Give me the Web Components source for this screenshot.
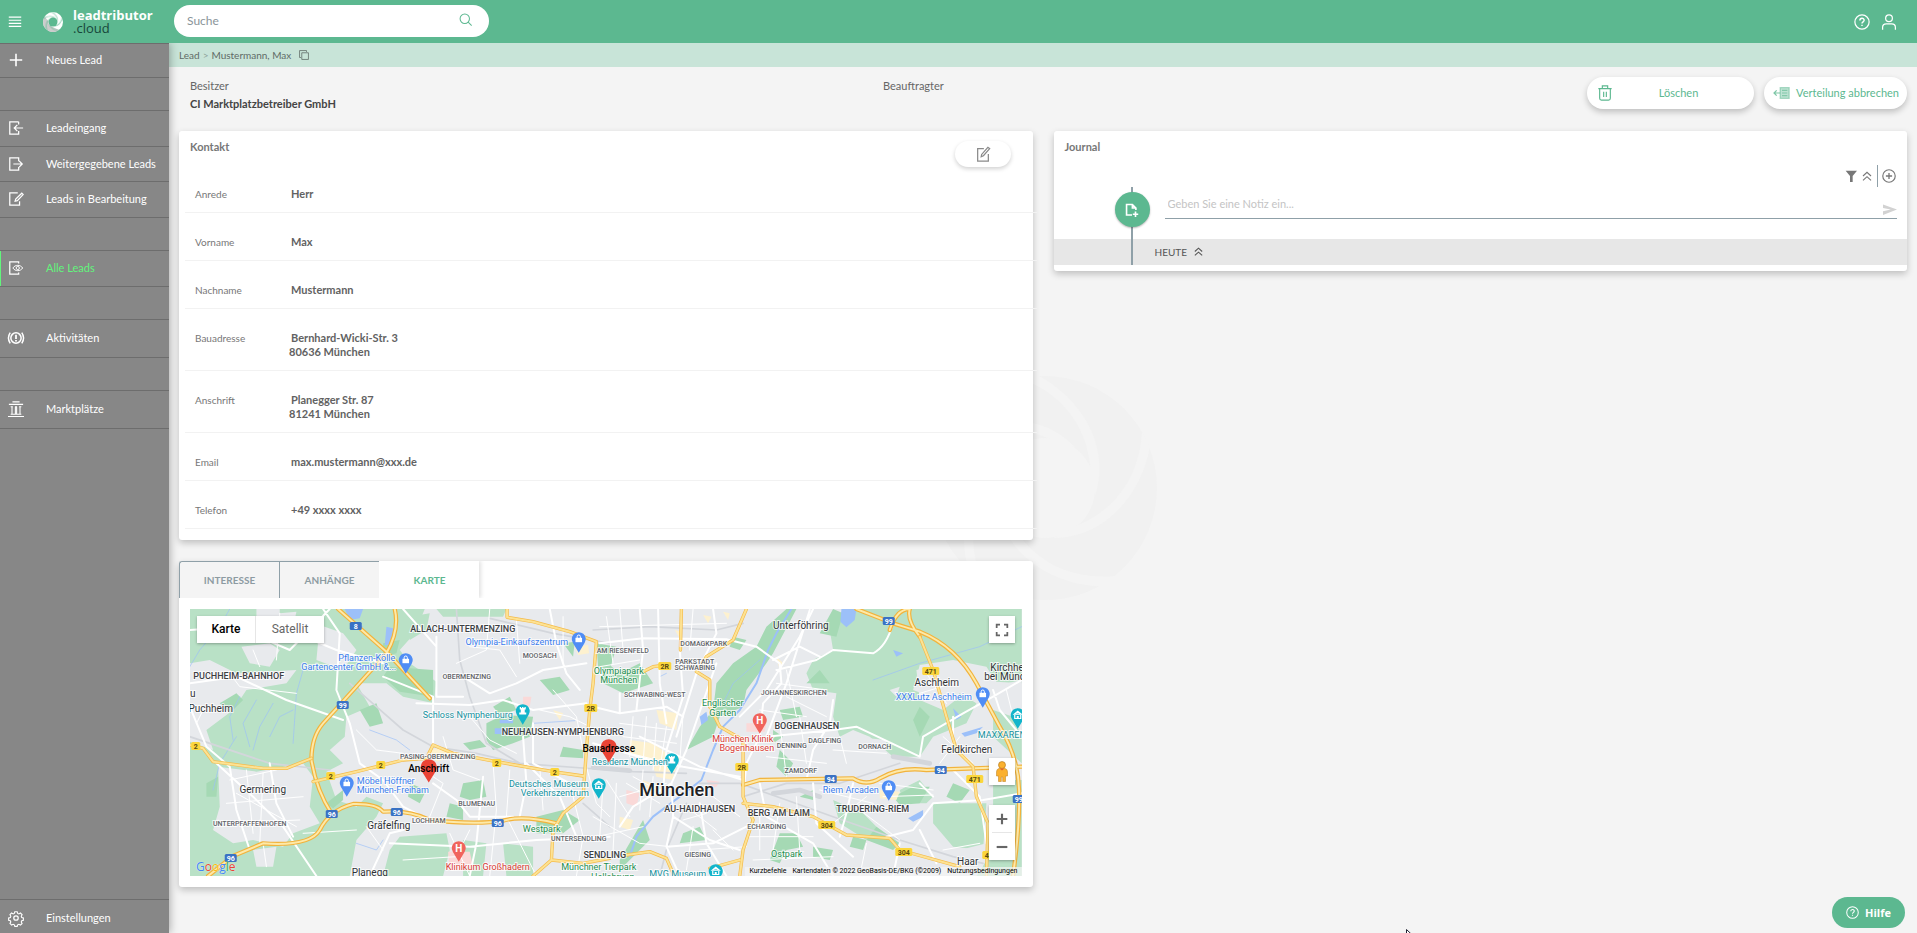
<!DOCTYPE html>
<html lang="de">
<head>
<meta charset="utf-8">
<meta name="viewport" content="width=device-width, initial-scale=1">
<title>leadtributor.cloud</title>
<style>
  html, body { margin: 0; height: 100%; }
  body {
    font: 11px/16px Lato, Roboto, sans-serif;
    color: #555; background: #f4f4f4;
    --green: #5cb890; --mint: #c8e4d8; --slate: #8fa0a8;
  }
</style>
</head>
<body>
<lt-app></lt-app>
<script>
const define = (tag, html, setup) => {
  const tpl = document.createElement('template');
  tpl.innerHTML = '<style>*{box-sizing:border-box}</style>' + html;
  customElements.define(tag, class extends HTMLElement {
    connectedCallback() {
      if (this.shadowRoot) return;
      this.attachShadow({ mode: 'open' }).append(tpl.content.cloneNode(true));
      if (setup) setup(this, this.shadowRoot);
    }
  });
};

/* ---------- icons ---------- */
const ICONS = {
  menu: '<path d="M2 3.500H16M2 7H16M2 10.500H16M2 14H16" stroke-width="1.300"/>',
  plus: '<path d="M9 2V16M2 9H16" stroke-width="1.800"/>',
  inbox: '<path d="M12 2H2V16H12V12.500M12 2V5M17 9H7M10.500 5.500 7 9 10.500 12.500"/>',
  outbox: '<path d="M12 6V2H2V16H12V12.500M6 9H16M12.500 5.500 16 9 12.500 12.500"/>',
  editlead: '<path d="M11 2H2V16H13V11.500M8 11.500 8.700 9 15.500 2.500 17 4 10.500 10.800Z"/>',
  seelead: '<path d="M12 4V2H2V16H12V14"/><path d="M5.500 9C8 5 14 5 16.500 9 14 13 8 13 5.500 9Z" stroke-width="1.100"/><circle cx="11" cy="9" r="1.800" stroke-width="1.100"/>',
  activity: '<circle cx="9" cy="9" r="5.800" stroke-width="1.700"/><path d="M9 5.300V10M9 11.300V12.800" stroke-width="2"/><path d="M2.500 3Q-1.500 9 2.500 15M15.500 3Q19.500 9 15.500 15" stroke-width="1.700"/>',
  market: '<path d="M5 1H13M1 3.800H17M3 6.500H5.500M7.800 6.500H10.200M12.500 6.500H15M4.500 7V15M8.300 7V15M9.700 7V15M13.500 7V15M3 15H15M0 17.500H18" stroke-width="1.200"/>',
  gear: '<circle cx="9" cy="9" r="2.500"/><path d="M7.500 1.200h3l.6 2.100 1.500.6 1.900-1.100 2.100 2.100-1 1.900.6 1.500 2 .6v3l-2 .6-.6 1.500 1 1.900-2.100 2-1.900-1-1.500.6-.6 2h-3l-.6-2-1.500-.6-1.900 1-2-2 1-1.900-.6-1.500-2.100-.6v-3l2.100-.6.6-1.500-1-1.900 2-2.100 1.900 1.100 1.500-.6Z" transform="translate(.9 .9) scale(.9)"/>',
  search: '<circle cx="8" cy="8" r="6.500"/><path d="M12.700 12.700 17.500 17.500"/>',
  help: '<circle cx="9" cy="9" r="8"/><path d="M6.600 7.300C6.600 4 11.400 4 11.400 7 11.400 8.800 9 8.800 9 10.700M9 12.200V13.600" stroke-width="1.600"/>',
  user: '<circle cx="9" cy="4.800" r="3.800"/><path d="M1.800 17.800V15Q1.800 11 6 11H12Q16.200 11 16.200 15V17.800"/>',
  copy: '<path d="M3.500 13.500H1V1H13.500V3.500M5 5H17V17H5Z"/>',
  edit: '<path d="M10 3H3V17H15V9M7 12 7.500 9.500 14.500 1.500 16.500 3 9.500 11Z"/>',
  trash: '<path d="M1.500 4H16.500M6 4V1H12V4M3 4V15Q3 17 5 17H13Q15 17 15 15V4M7.500 7.500V13.500M10.500 7.500V13.500" stroke-width="1.300"/>',
  recall: '<path d="M0 9H7M3 6 0 9 3 12" stroke-opacity=".8"/><path d="M7 3H17V15H7Z" fill="currentColor" fill-opacity=".4" stroke-opacity=".5"/><path d="M9 6H15M9 9H15M9 12H15" stroke-opacity=".6"/>',
  filter: '<path d="M1 1H18L11.500 9V18H7.500V9Z" fill="currentColor" stroke="none"/>',
  up: '<path d="M3 9 9 3.500 15 9M3 15.500 9 10 15 15.500" stroke-width="1.700"/>',
  add: '<circle cx="9" cy="9" r="8" stroke-width="1.500"/><path d="M9 5V13M5 9H13" stroke-width="1.700"/>',
  send: '<path d="M0 2 18 8.500 0 15.500V10.700L10 8.500 0 6.500Z" fill="currentColor" stroke="none"/>',
  note: '<path d="M9 15.500H2V2H9.500L14 6.500V9M9.500 2V6.500H14M13.500 11V18M10 14.500H17" stroke-width="2.100"/>',
  full: '<path d="M1 6V1H6M12 1H17V6M17 12V17H12M6 17H1V12" stroke-width="2.600"/>',
  minus: '<path d="M1 9H17" stroke-width="3.200"/>',
  more: '<path d="M1 9H17M9 1V17" stroke-width="3.200"/>'
};
define('lt-icon', `<style>
  :host { display: inline-flex; width: 14px; height: 14px; flex: none; }
  svg { width: 100%; height: 100%; overflow: visible; }
</style><svg viewBox="0 0 18 18" fill="none" stroke="currentColor" stroke-width="1.400" aria-hidden="true"></svg>`,
  (el, root) => { root.querySelector('svg').innerHTML = ICONS[el.getAttribute('name')] || ''; });

/* Aperture mark: disc with five curved blade gaps around an open centre. */
define('lt-mark', `<style>
  :host { display: block; aspect-ratio: 1; }
  svg { display: block; width: 100%; height: 100%; }
  .gap { fill: var(--mark-gap); }
  .blades { opacity: var(--mark-blades, 1); }
  .disc { fill: var(--mark-fill); }
  .shade { fill: var(--mark-shade, var(--mark-fill)); }
</style><svg viewBox="-336 -336 672 672" aria-hidden="true">
  <circle class="disc" r="336"/>
  <path class="shade" d="M-336 0A336 336 0 0 0 200 270L-40 150A150 150 0 0 1 -150 -20L-280 -185A336 336 0 0 0 -336 0Z"/>
  <circle class="gap" r="150"/>
  <g class="gap blades"></g>
</svg>`, (el, root) => {
  root.querySelector('g').innerHTML = [0, 82, 154, 226, 288].map(a =>
    `<path transform="rotate(${a})" d="M291 -172C285 -50 225 60 95 113L25 150C180 150 290 20 315 -125Z"/>`).join('');
});

/* ---------- header ---------- */
define('lt-header', `<style>
  :host { display: flex; align-items: center; height: 43px; background: var(--green); color: #fff; position: relative; z-index: 3; }
  button { border: 0; background: none; color: inherit; padding: 0; display: flex; }
  .menu { margin-left: 7px; }
  .brand { display: flex; align-items: center; gap: 10px; margin-left: 20px; width: 131px; color: #fff; text-decoration: none; }
  lt-mark { width: 20px; --mark-fill: #fff; --mark-shade: #ccc; --mark-gap: var(--green); --mark-blades: .7; }
  .name { display: block; font: 13px/13px "Open Sans", sans-serif; }
  .name b, .name span { display: block; height: 13px; }
  .name span { color: #17473a; }
  form { display: flex; align-items: center; width: 315px; height: 32px; margin-top: -1px; padding: 0 17px 0 13px; border-radius: 16px; background: #fff; color: var(--green); }
  input { flex: 1; min-width: 0; border: 0; outline: 0; padding: 0; background: none; font: inherit; font-size: 12px; color: #555; }
  input::placeholder { color: #8a9499; opacity: 1; }
  form lt-icon { width: 13px; height: 13px; margin-top: -4px; }
  .tools { margin-left: auto; display: flex; gap: 11px; padding-right: 20px; }
  .tools lt-icon, .menu lt-icon { width: 16px; height: 16px; }
</style>
<button class="menu" aria-label="Menü"><lt-icon name="menu"></lt-icon></button>
<a class="brand" href="#"><lt-mark></lt-mark><span class="name"><b>leadtributor</b><span>.cloud</span></span></a>
<form role="search"><input type="text" aria-label="Suche" placeholder="Suche"><button type="button" aria-label="Suchen"><lt-icon name="search"></lt-icon></button></form>
<div class="tools"><button aria-label="Hilfe"><lt-icon name="help"></lt-icon></button><button aria-label="Konto"><lt-icon name="user"></lt-icon></button></div>`);

/* ---------- sidebar ---------- */
define('lt-nav-item', `<style>
  :host { display: block; height: 36px; border-top: 1px solid #6d6d6d; color: #fff; }
  :host([tall]) { height: 38px; }
  :host([mid]) { height: 35px; }
  :host([slim]) { height: 34px; }
  a { display: flex; align-items: center; gap: 22px; height: 100%; padding-left: 8px; padding-bottom: 1px; color: inherit; text-decoration: none; white-space: nowrap; }
  :host([foot]) a { padding: 3px 0 0 8px; }
  :host([active]) { color: #62f57c; }
  :host([active]) a { box-shadow: inset 1px 0 #62f57c; }
  lt-icon { color: #fff; width: 16px; height: 16px; }
</style><a href="#"><lt-icon></lt-icon><slot></slot></a>`,
  (el, root) => {
    const icon = document.createElement('lt-icon');
    icon.setAttribute('name', el.getAttribute('icon'));
    root.querySelector('lt-icon').replaceWith(icon);
  });
define('lt-sidebar', `<style>
  :host { display: block; width: 169px; background: #878787; box-shadow: 1px 0 8px rgba(0,0,0,.3); position: relative; z-index: 2; }
  nav { display: flex; flex-direction: column; height: 100%; }
  .gap { height: 33px; border-top: 1px solid #6d6d6d; }
  .rest { flex: 1; border-top: 1px solid #6d6d6d; }
</style><nav>
  <lt-nav-item slim icon="plus">Neues Lead</lt-nav-item><div class="gap"></div>
  <lt-nav-item icon="inbox">Leadeingang</lt-nav-item>
  <lt-nav-item mid icon="outbox">Weitergegebene Leads</lt-nav-item>
  <lt-nav-item icon="editlead">Leads in Bearbeitung</lt-nav-item><div class="gap"></div>
  <lt-nav-item active icon="seelead">Alle Leads</lt-nav-item><div class="gap"></div>
  <lt-nav-item tall icon="activity">Aktivitäten</lt-nav-item><div class="gap"></div>
  <lt-nav-item tall icon="market">Marktplätze</lt-nav-item><div class="rest"></div>
  <lt-nav-item slim foot icon="gear">Einstellungen</lt-nav-item>
</nav>`);

/* ---------- shared pieces ---------- */
define('lt-crumbs', `<style>
  :host { display: flex; align-items: center; height: 24px; padding-left: 10px; background: var(--mint); font-size: 10px; color: #5f6b66; }
  a { color: inherit; text-decoration: none; }
  i { font-style: normal; margin: 0 3px; color: #8fa59b; }
  button { border: 0; background: none; padding: 0; margin-left: 8px; display: flex; color: #5f6b66; }
  lt-icon { width: 10px; height: 10px; }
</style><a href="#">Lead</a><i>&gt;</i><a href="#">Mustermann, Max</a><button aria-label="Kopieren"><lt-icon name="copy"></lt-icon></button>`);

define('lt-card', `<style>
  :host { display: block; background: #fff; border-radius: 3px; box-shadow: 0 3px 7px rgba(0,0,0,.22); }
  h2 { margin: 0; padding: 8px 11px 0; font-size: 11px; line-height: 16px; font-weight: 700; color: #777; }
</style><h2></h2><slot></slot>`, (el, root) => { root.querySelector('h2').textContent = el.getAttribute('heading'); });

define('lt-pill', `<style>
  :host { display: block; }
  button { display: flex; align-items: center; justify-content: center; width: 100%; height: 32px; padding: 0 10px; border: 0; border-radius: 16px; background: #fff; box-shadow: 0 3px 6px rgba(0,0,0,.22); font: inherit; color: var(--green); }
  span { flex: 1; text-align: center; white-space: nowrap; }
  :host([snug]) button { padding-right: 8px; }
  :host([snug]) span { text-align: right; }
</style><button><slot name="icon"></slot><span><slot></slot></span></button>`);

define('lt-toolbar', `<style>
  :host { display: flex; justify-content: space-between; align-items: flex-start; height: 64px; }
  dl { margin: 0; line-height: 18px; }
  dt { color: #666; } dd { margin: 0; font-weight: 700; color: #444; }
  .who { width: calc(50% - 160px); padding: 10px 0 0 11px; }
  .acting { flex: 1; padding-top: 10px; }
  .actions { display: flex; gap: 10px; padding-top: 10px; }
  .actions lt-pill:first-child { width: 167px; }
  .actions lt-pill:last-child { width: 143px; }
  lt-icon { width: 16px; height: 16px; }
</style>
<dl class="who"><dt>Besitzer</dt><dd>CI Marktplatzbetreiber GmbH</dd></dl>
<dl class="acting"><dt>Beauftragter</dt></dl>
<div class="actions"><lt-pill><lt-icon slot="icon" name="trash"></lt-icon>Löschen</lt-pill><lt-pill snug><lt-icon slot="icon" name="recall"></lt-icon>Verteilung abbrechen</lt-pill></div>`);

/* ---------- contact ---------- */
define('lt-contact', `<style>
  :host { display: block; }
  lt-card { height: 409px; position: relative; }
  button { position: absolute; right: 22px; top: 10px; width: 56px; height: 26px; border: 0; border-radius: 13px; background: #fff; box-shadow: 0 2px 4px rgba(0,0,0,.18); color: #8a8a8a; display: flex; align-items: center; justify-content: center; }
  button lt-icon { width: 16px; height: 16px; }
  dl { margin: 10px -4px 0 6px; }
  .row { display: grid; grid-template-columns: 96px 1fr; height: 48px; padding: 22px 0 0 10px; border-bottom: 1px solid #f2f2f2; line-height: 14px; }
  .double { height: 62px; }
  dt { font-size: 10px; color: #777; }
  dd { margin: 0; color: #626262; font-weight: 700; }
  dd span { display: block; margin-left: -2px; }
</style><lt-card heading="Kontakt"><button aria-label="Bearbeiten"><lt-icon name="edit"></lt-icon></button>
<dl>
  <div class="row"><dt>Anrede</dt><dd>Herr</dd></div>
  <div class="row"><dt>Vorname</dt><dd>Max</dd></div>
  <div class="row"><dt>Nachname</dt><dd>Mustermann</dd></div>
  <div class="row double"><dt>Bauadresse</dt><dd>Bernhard-Wicki-Str. 3<span>80636 München</span></dd></div>
  <div class="row double"><dt>Anschrift</dt><dd>Planegger Str. 87<span>81241 München</span></dd></div>
  <div class="row"><dt>Email</dt><dd>max.mustermann@xxx.de</dd></div>
  <div class="row"><dt>Telefon</dt><dd>+49 xxxx xxxx</dd></div>
</dl></lt-card>`);

/* ---------- journal ---------- */
define('lt-journal', `<style>
  :host { display: block; }
  button { border: 0; background: none; padding: 0; color: #777; display: flex; font: inherit; }
  .tools { display: flex; align-items: center; justify-content: flex-end; gap: 4px; height: 22px; margin-top: 10px; padding-right: 11px; }
  .tools i { width: 1px; height: 22px; background: var(--slate); }
  .tools .s { width: 12px; height: 12px; }
  .feed { position: relative; }
  .line { position: absolute; left: 77px; top: 0; bottom: 0; width: 2px; background: var(--slate); }
  .entry { display: flex; height: 52px; padding: 5px 10px 0 61px; }
  .dot { position: relative; z-index: 1; width: 35px; height: 35px; border-radius: 50%; background: var(--green); color: #fff; display: flex; align-items: center; justify-content: center; box-shadow: 0 1px 2px rgba(0,0,0,.3); }
  form { flex: 1; display: flex; height: 27px; margin-left: 15px; border-bottom: 1px solid var(--slate); }
  input { flex: 1; border: 0; outline: 0; padding: 0 3px 2px; background: none; font: inherit; color: #555; }
  input::placeholder { color: #c4c4c4; opacity: 1; }
  form button { color: #d2d2d2; align-items: flex-end; padding-bottom: 1px; }
  .day { display: flex; align-items: center; gap: 6px; height: 26px; padding: 0 0 1px 101px; background: #e7e7e7; font-size: 10px; color: #555; }
  .day lt-icon { width: 11px; height: 11px; }
  lt-card { height: 140px; }
</style><lt-card heading="Journal">
<div class="tools"><button aria-label="Filter"><lt-icon class="s" name="filter"></lt-icon></button><button aria-label="Einklappen"><lt-icon class="s" name="up"></lt-icon></button><i></i><button aria-label="Hinzufügen"><lt-icon name="add"></lt-icon></button></div>
<div class="feed">
  <div class="entry"><span class="dot"><lt-icon name="note"></lt-icon></span><form><input type="text" aria-label="Notiz" placeholder="Geben Sie eine Notiz ein..."><button type="button" aria-label="Senden"><lt-icon name="send"></lt-icon></button></form></div>
  <div class="day">HEUTE <lt-icon name="up"></lt-icon></div>
  <div class="line"></div>
</div></lt-card>`);

/* ---------- map ---------- */
/* Two survey tiles, three units to a pixel; TILE holds each tile's shift in pixels. */
const TILE = { w: -20, e: 410 };
const LABELS = [
  ['w', 878, 237, 'ALLACH-UNTERMENZING', 9, 't'], ['w', 1110, 318, 'MOOSACH', 7, 's'], ['w', 890, 381, 'OBERMENZING', 7, 's'],
  ['w', 208, 379, 'PUCHHEIM-BAHNHOF', 9, 't'], ['w', 68, 431, 'u', 10, 'o'], ['w', 123, 476, 'Puchheim', 10, 'o'],
  ['w', 1040, 276, 'Olympia-Einkaufszentrum', 9, 'b'], ['w', 592, 324, 'Pflanzen-Kölle', 9, 'b'], ['w', 537, 352, 'Gartencenter GmbH &...', 9, 'b'],
  ['w', 895, 494, 'Schloss Nymphenburg', 9, 'c'], ['w', 1178, 546, 'NEUHAUSEN-NYMPHENBURG', 9, 't'],
  ['w', 805, 620, 'PASING-OBERMENZING', 7, 's'], ['w', 280, 721, 'Germering', 10, 'o'], ['w', 240, 822, 'UNTERPFAFFENHOFEN', 7, 's'],
  ['w', 647, 692, 'Möbel Höffner', 9, 'b'], ['w', 669, 720, 'München-Freiham', 9, 'b'], ['w', 920, 762, 'BLUMENAU', 7, 's'],
  ['w', 777, 814, 'LOCHHAM', 7, 's'], ['w', 657, 829, 'Gräfelfing', 10, 'o'], ['w', 1117, 836, 'Westpark', 9, 'g'],
  ['w', 1228, 867, 'UNTERSENDLING', 7, 's'], ['w', 955, 950, 'Klinikum Großhadern', 9, 'r'], ['w', 600, 969, 'Planegg', 10, 'o'],
  ['w', 1138, 701, 'Deutsches Museum', 9, 'c'], ['w', 1155, 729, 'Verkehrszentrum', 9, 'c'],
  ['e', 604, 228, 'Unterföhring', 10, 'o'], ['e', 312, 281, 'DOMAGKPARK', 7, 's'], ['e', 68, 303, 'AM RIESENFELD', 7, 's'],
  ['e', 286, 337, 'PARKSTADT', 7, 's'], ['e', 286, 355, 'SCHWABING', 7, 's'], ['e', 56, 362, 'Olympiapark', 9, 'g'], ['e', 56, 390, 'München', 9, 'g'],
  ['e', 166, 435, 'SCHWABING-WEST', 7, 's'], ['e', 583, 428, 'JOHANNESKIRCHEN', 7, 's'], ['e', 368, 460, 'Englischer', 9, 'g'], ['e', 368, 488, 'Garten', 9, 'g'],
  ['e', 622, 527, 'BOGENHAUSEN', 9, 't'], ['e', 430, 567, 'München Klinik', 9, 'r'], ['e', 441, 595, 'Bogenhausen', 9, 'r'],
  ['e', 575, 587, 'DENNING', 7, 's'], ['e', 676, 573, 'DAGLFING', 7, 's'], ['e', 826, 591, 'DORNACH', 7, 's'], ['e', 604, 664, 'ZAMDORF', 7, 's'],
  ['e', 1010, 398, 'Aschheim', 10, 'o'], ['e', 1240, 354, 'Kirchheim', 10, 'o'], ['e', 1240, 382, 'bei München', 10, 'o'],
  ['e', 1003, 442, 'XXXLutz Aschheim', 9, 'b'], ['e', 1215, 554, 'MAXXARENA', 9, 'c'], ['e', 1100, 599, 'Feldkirchen', 10, 'o'],
  ['e', 90, 637, 'Residenz München', 9, 'c'], ['e', 754, 720, 'Riem Arcaden', 9, 'b'], ['e', 820, 776, 'TRUDERING-RIEM', 9, 't'],
  ['e', 230, 721, 'München', 18, 'x'], ['e', 300, 778, 'AU-HAIDHAUSEN', 9, 't'], ['e', 536, 788, 'BERG AM LAIM', 9, 't'], ['e', 502, 832, 'ECHARDING', 7, 's'],
  ['e', 16, 915, 'SENDLING', 9, 't'], ['e', 295, 914, 'GIESING', 7, 's'], ['e', 560, 912, 'Ostpark', 9, 'g'], ['e', 1103, 936, 'Haar', 10, 'o'],
  ['e', -3, 952, 'Münchner Tierpark', 9, 'g'], ['e', 38, 980, 'Hellabrunn', 9, 'g'], ['e', 234, 971, 'MVG Museum', 9, 'c'],
  ['w', 778, 657, 'Anschrift', 10, 'k'], ['e', 28, 597, 'Bauadresse', 10, 'k']
];
const SHIELDS = [
  ['w', 558, 229, '8', 'A'], ['w', 520, 465, '99', 'A'], ['w', 486, 793, '96', 'A'], ['w', 682, 786, '96', 'A'], ['w', 985, 818, '96', 'A'], ['w', 183, 925, '96', 'A'],
  ['e', 866, 212, '99', 'A'], ['e', 694, 686, '94', 'A'], ['e', 1024, 660, '94', 'A'], ['e', 1258, 746, '99', 'A'],
  ['w', 78, 587, '2', 'B'], ['w', 482, 677, '2', 'B'], ['w', 633, 646, '2', 'B'], ['w', 980, 639, '2', 'B'], ['w', 1156, 665, '2', 'B'], ['w', 1262, 475, '2R', 'B'],
  ['e', 196, 347, '2R', 'B'], ['e', 425, 651, '2R', 'B'], ['e', 994, 363, '471', 'B'], ['e', 1126, 687, '471', 'B'], ['e', 681, 824, '304', 'B'], ['e', 913, 905, '304', 'B'], ['e', 1162, 915, '4', 'B']
];
const BAG = '<path d="M-3.300-1.200H3.300V3.200H-3.300Z" fill="#fff"/><path d="M-1.600-1V-2.400A1.600 1.600 0 0 1 1.600-2.400V-1" fill="none" stroke="#fff"/>';
const TOWER = '<path d="M-3-4H-1.700V-3H-.7V-4H.7V-3H1.700V-4H3V-1.500H2V1.500H3.500V3.500H-3.500V1.500H-2V-1.500H-3Z" fill="#fff"/>';
const HALL = '<path d="M-3.500-.8 0-3.700 3.500-.8ZM-3 0V3.500H3V0" fill="none" stroke="#fff" stroke-width="1.200"/><path d="M-1 1H1V3.500H-1Z" fill="#fff"/>';
const PINS = [
  ['w', 1227, 267, '#4f8df5', BAG], ['w', 708, 329, '#4f8df5', BAG], ['w', 532, 698, '#4f8df5', BAG], ['e', 1148, 433, '#4f8df5', BAG], ['e', 866, 712, '#4f8df5', BAG],
  ['w', 1060, 484, '#12b5cb', TOWER], ['e', 215, 629, '#12b5cb', TOWER], ['w', 1287, 706, '#12b5cb', HALL], ['e', 1254, 496, '#12b5cb', HALL], ['e', 348, 962, '#12b5cb', HALL],
  ['w', 868, 893, '#f0645c', 'H'], ['e', 480, 511, '#f0645c', 'H']
];
const A = 'translate(-20 -59) scale(.33333)', B = 'translate(410 -59) scale(.33333)';
define('lt-map', `<style>
  :host { display: block; position: relative; height: 267px; overflow: hidden; background: #e8eaed; font-family: Roboto, sans-serif; }
  .chart { display: block; width: 100%; height: 267px; }
  .forest { fill: #b9e1c6; } .park { fill: #a5d9b4; } .town { fill: #e8eaed; } .water { fill: #9cc0f9; }
  .river, .rail, .street, .minor, .mwb, .mw, .trb, .tr { fill: none; stroke-linejoin: round; stroke-linecap: round; }
  .river { stroke: #9cc0f9; stroke-width: 6; } .brook { stroke-width: 2; } .rail { stroke: #d3d6db; stroke-width: 5; }
  .street { stroke: #fff; stroke-width: 6; } .minor { stroke: #fff; stroke-width: 3; }
  .mwb { stroke: #f2b33c; stroke-width: 13; } .mw { stroke: #fde9a8; stroke-width: 6; }
  .trb { stroke: #f4bb4a; stroke-width: 10; } .tr { stroke: #fde293; stroke-width: 6; }
  .soft { fill: #fdf1cf; } .clinic { fill: #fad9d8; }
  text { text-anchor: middle; paint-order: stroke; stroke: #fff; stroke-width: 2px; stroke-opacity: .75; }
  .t { fill: #3c4043; font-weight: 500; } .o { fill: #303336; } .s { fill: #5f6368; font-weight: 500; } .b { fill: #3b7ded; } .c { fill: #14919f; } .g { fill: #1e8e4e; }
  .r { fill: #d93a35; } .x { fill: #202124; font-weight: 500; } .k { fill: #000; font-weight: 500; stroke: none; }
  .A, .B { font-size: 7px; font-weight: 700; stroke: none; } .A { fill: #fff; } .B { fill: #5a4a10; }
  .H { fill: #fff; stroke: none; font-size: 10px; font-weight: 700; }
  button { border: 0; padding: 0; background: #fff; color: #666; display: flex; align-items: center; justify-content: center; width: 26px; height: 27px; font: 12px/16px Roboto, sans-serif; }
  .types, .ctl { position: absolute; box-shadow: 0 1px 3px rgba(0,0,0,.3); border-radius: 1px; }
  .types { left: 7px; top: 7px; display: flex; }
  .types button { width: 68px; padding-bottom: 2px; color: #666; } .types button:first-child { width: 59px; color: #000; font-weight: 500; border-right: 1px solid #e6e6e6; }
  .ctl { right: 7px; } .fs { top: 7px; } .man { bottom: 91px; } .zoom { bottom: 16px; background: #fff; }
  .zoom hr { border: 0; margin: 0 3px; height: 1px; background: #e6e6e6; }
  .ctl lt-icon { width: 12px; height: 12px; }
  .logo { position: absolute; left: 6px; bottom: 1px; font: 500 12px/16px "Open Sans", sans-serif; text-shadow: 0 0 1px #fff; text-decoration: none; }
  .legal { position: absolute; right: 0; bottom: 0; display: flex; gap: 6px; padding: 0 4px; background: rgba(245,245,245,.7); font: 7px/9px Roboto, sans-serif; color: #000; }
  .legal a, .legal button { color: #000; text-decoration: none; font: inherit; width: auto; height: 9px; background: none; }
</style>
<svg class="chart" viewBox="0 0 832 267" preserveAspectRatio="xMidYMid slice" role="img" aria-label="Karte von München">
<g transform="${A}">
  <path class="forest" d="M60 177H765L735 250 690 300 720 340 800 395 792 460 700 440 650 400 560 400 600 470 530 500 525 560 480 600 520 640 470 665 500 750 560 770 590 740 640 760 620 800 560 870 540 978H60Z"/>
  <path class="forest" d="M690 860 830 850 840 900 820 978H640L660 900ZM880 870 950 880 940 978H880ZM1000 880 1090 890 1090 978H1010ZM800 177H1010L1000 200H820ZM720 200 780 190 770 240 720 270Z"/>
  <path class="town" d="M60 340 120 330 200 370 380 360 350 400 230 420 190 480 110 540 130 600 60 575ZM215 290 300 280 330 300 300 350 240 340ZM330 190 380 185 370 230 330 240ZM260 177H330V200H260ZM145 650 260 665 400 640 430 680 420 770 450 820 370 850 340 890 250 870 190 880 130 840 150 770ZM450 225 520 250 560 300 520 360 440 330ZM250 900 320 890 310 950 260 950ZM560 660 610 650 620 730 560 700Z"/>
  <path class="park" d="M950 520 1000 495 1090 500 1080 560 1030 580 970 600 950 570ZM970 470 1020 440 1040 480 990 495ZM1110 390 1170 380 1200 420 1150 435ZM1180 280 1215 275 1210 320ZM1280 280 1340 290 1320 360 1285 350ZM880 700 940 690 950 740 900 750 870 740ZM1100 800 1180 780 1230 810 1180 850 1100 850ZM880 580 930 570 950 590 900 600ZM660 350 790 360 790 440 690 425 640 380ZM640 280 690 270 680 310 640 320ZM150 460 200 430 220 450 180 490ZM110 700 145 680 140 740 110 740ZM470 760 520 720 520 750 490 775ZM720 700 770 720 750 760 715 740ZM840 760 880 770 880 810 830 800ZM1180 590 1240 600 1240 625 1170 620ZM570 480 620 460 640 520 600 530Z"/>
  <path class="water" d="M525 177H580L570 205 540 210ZM555 215 580 230 560 240ZM650 230 670 235 665 285 645 285ZM975 535H1000V552H975ZM990 510H1030V520H990Z"/>
  <path class="soft" d="M780 600 830 590 850 620 800 635ZM1215 290 1255 285 1258 310 1225 315ZM1150 480 1180 490 1170 510Z"/>
  <path class="clinic" d="M835 905 900 905 910 950 840 960ZM1060 440 1085 440 1080 470 1060 465Z"/>
  <path class="river brook" d="M180 177 150 230 90 300 60 350M210 440 180 500 190 570M260 450 220 520 240 590M310 460 270 530 250 600M370 480 330 500 300 560M400 360 380 430 370 580M600 540 680 570 720 600M1090 520 1215 512M560 880 620 900 640 870M200 560 150 640 130 720"/>
</g>
<g transform="${B}">
  <path class="forest" d="M745 177H1266V400L1190 395 1160 350 1060 330 960 345 940 420 1020 450 1080 430 1130 460 1100 520 1000 560 960 620 880 620 810 560 760 540 720 560 700 500 710 430 640 420 620 370 640 330 700 300 690 240ZM1180 480 1240 500 1266 560V640L1180 560ZM1000 760 1160 760 1150 900 1060 890 1000 820ZM1180 690 1266 690V978H1130L1180 900ZM900 720 960 690 1000 740 980 760 910 760ZM700 750 790 790 860 860 800 870 720 820Z"/>
  <path class="town" d="M950 360 1000 350 1060 370 1080 440 1030 480 960 450ZM1180 410 1266 390V480H1200ZM1000 580 1090 540 1180 580 1200 640 1130 660 1010 640ZM870 420 900 410 890 440ZM1080 900 1160 880 1150 950 1080 960ZM760 560 860 570 860 600 770 600Z"/>
  <path class="park" d="M500 230 560 177H590L520 310 500 340 440 420 430 470 360 500 340 560 260 600 300 530 340 480 350 400 400 340 470 290ZM0 320 60 370 120 340 160 400 70 430 10 400ZM700 177 730 190 710 260 660 250ZM620 400 660 360 690 400ZM540 600 580 640 560 680 530 650ZM600 740 640 720 640 750ZM250 850 300 830 320 870 240 880ZM540 850 590 850 610 890 560 900 540 940 510 930ZM130 810 150 870 60 960 60 930ZM830 830 900 880 880 900 800 870ZM960 470 990 500 960 560 940 510ZM880 740 940 710 990 710 960 760 900 765ZM1060 700 1110 720 1080 760 1040 740ZM640 890 700 900 690 930 640 920ZM400 260 440 270 420 300 390 290ZM760 860 800 870 790 900 750 890ZM540 480 600 470 610 500 550 510ZM520 540 550 560 520 580Z"/>
  <path class="water" d="M725 177H770L765 210 740 232 722 215ZM1060 475 1085 500 1070 510ZM1085 550 1150 530 1130 550 1095 560ZM925 805 970 780 970 800 940 815ZM880 300 910 310 890 320ZM300 500 320 485 325 510 305 525Z"/>
  <path class="soft" d="M310 195 335 200 325 220ZM370 185 390 190 385 210ZM225 240 245 245 240 265ZM170 480 235 490 230 540 180 520ZM90 570 160 580 200 610 150 640 90 610ZM160 650 230 640 220 690 170 680ZM130 690 180 710 170 740 120 730ZM60 800 100 810 90 840 60 830ZM530 320 550 340 540 360ZM840 720 900 725 890 750 840 745ZM120 600 240 620 225 660 130 640Z"/>
  <path class="clinic" d="M80 720 120 730 110 770 80 760ZM320 690 360 695 350 710 330 715ZM440 520 500 520 495 545 440 545Z"/>
  <path class="river" d="M575 177 530 250 505 300 470 400 420 480 370 530 340 600 305 690 240 740 160 800 110 860 90 920"/>
  <path class="river brook" d="M1266 230 1140 290 960 340 820 390M180 380 200 370M120 850 105 870M480 330 400 400 370 460"/>
</g>
<g transform="${A}">
  <path class="rail" d="M540 400 620 470 700 540 790 590 920 610 1050 640 1320 660M60 560 300 640 480 660M860 177 870 330 900 440 950 580 1050 640M960 205 1150 250 1320 280M1240 760 1320 830"/>
  <path class="street" d="M60 240 200 230 330 230 500 300 640 340M60 400 200 380 350 450 520 510M60 470 110 590 180 650 200 780 240 900M460 177 510 250 500 420 540 520 570 640 640 690M640 380 790 440 790 590M800 260 800 440 880 440M800 290 700 177M740 460 900 465 1000 450 1090 480 1250 460M880 380 960 430 1040 400 1120 360 1250 340M1140 177 1160 280 1190 370 1230 420M1060 560 1070 700 1050 800M940 680 920 880 900 978M640 690 700 770 740 790M790 700 860 750 900 800 1030 800M1070 640 1170 740 1220 860M140 640 250 740 340 830 440 978M300 640 320 760 370 860M600 978 660 850 700 840M660 880 900 890 1100 870 1320 860M1090 520 1090 640 1200 700M480 177 360 300 220 240"/>
  <path class="minor" d="M180 370 210 410 380 430M100 480 80 520M250 300 270 350M330 190 320 330M180 690 320 660M170 760 400 740M230 660 250 850M280 670 270 880M160 820 390 810M200 730 380 830M900 290 990 300 1040 380M1040 210 1050 340M960 177 950 300 860 340M1180 200 1180 340M900 500 960 570 1040 610M820 560 850 660 930 690M560 540 620 600 700 610M760 660 820 700 780 800M700 930 860 920 900 840M840 850 900 978M970 640 980 780 960 978M1020 660 1010 800 1100 978M1110 480 1200 500 1320 560M1110 650 1120 780M1200 700 1240 860 1220 978M1250 650 1280 760 1320 800M1150 420 1220 500 1240 600M400 850 560 840M280 880 290 950M590 830 640 900"/>
  <path class="mwb" d="M505 177 650 305 780 445M675 177Q690 240 650 310L460 520Q425 560 425 630 440 720 485 790M190 918 280 880Q420 890 450 840 480 780 550 762 620 760 640 785 720 780 780 810 920 825 1000 812 1060 795 1160 820M190 918 115 978"/><path class="mw" d="M505 177 650 305 780 445M675 177Q690 240 650 310L460 520Q425 560 425 630 440 720 485 790M190 918 280 880Q420 890 450 840 480 780 550 762 620 760 640 785 720 780 780 810 920 825 1000 812 1060 795 1160 820M190 918 115 978"/>
  <path class="trb" d="M60 585 100 595 130 635 280 655 350 655 425 625M430 695 560 665 700 630 770 625 790 585 850 610 980 635 1150 665 1240 678M1012 177V202L1090 215 1200 245 1280 275 1270 400 1260 480 1250 600 1240 740 1180 790 1150 840 1145 930 1090 978M1145 930 1240 940 1320 925"/><path class="tr" d="M60 585 100 595 130 635 280 655 350 655 425 625M430 695 560 665 700 630 770 625 790 585 850 610 980 635 1150 665 1240 678M1012 177V202L1090 215 1200 245 1280 275 1270 400 1260 480 1250 600 1240 740 1180 790 1150 840 1145 930 1090 978M1145 930 1240 940 1320 925"/>
</g>
<g transform="${B}">
  <path class="rail" d="M-20 655 100 665 260 670M300 700 420 700 560 750 700 800 900 870 1060 920 1150 940M430 740 560 700 720 700 900 640M-20 240 150 230 350 240 430 220M260 760 200 900 180 978"/>
  <path class="rail" style="stroke-width:14" d="M-20 652 90 662M520 730 600 720 660 740M880 620 990 640"/>
  <path class="street" d="M0 280 130 265 380 268 470 290 540 340 545 400 490 460 480 560M60 490 200 470 250 500M60 430 60 490 -20 470M120 177 130 300 110 480M175 177 180 400 200 520M240 300 250 440 200 600 190 720M340 177 350 250 290 370 230 560M350 340 260 600 215 700M-20 580 150 630 250 650 420 680M420 500 500 420 600 260 640 177M480 560 440 640 430 740M500 560 700 540 770 530 960 620 970 560 1090 490 1180 440 1266 390M530 360 650 330 700 300 820 310Q860 290 880 220M520 330 600 290 660 320M700 450 690 520 640 600 620 690M630 180 560 400 500 560M430 690 300 650 120 560M215 700 100 770 60 830M215 700 220 800 200 890 240 978M220 800 330 870 420 900M300 760 320 880 380 978M200 890 340 880 440 830M480 700 500 800 640 880 700 978M640 700 650 820 760 920M760 700 740 790 720 860M860 860 940 840 1000 760 1150 750 1266 730M960 700 1000 740M1060 660 1140 740 1160 880M1180 420 1200 480 1266 560M1060 600 1060 500M900 880 880 978M960 840 1010 940"/>
  <path class="minor" d="M20 200 40 340M60 177 70 300M0 230 380 220M0 350 120 330M280 177 270 300M60 520 220 540M70 560 230 580M100 500 90 620M140 500 130 640M170 520 160 660M200 530 180 660M50 600 210 640M250 490 240 640M80 700 180 760M100 680 210 740M130 660 120 780M160 680 150 800M60 740 200 700M20 690 90 800M10 700 0 860M50 700 40 900M-20 800 120 880 210 890M-10 860 130 830M260 770 350 840M250 810 320 790M340 740 420 800M300 900 440 890M340 840 400 900M280 830 260 960M480 790 480 900M540 760 520 900M590 740 600 900M440 860 640 860M460 930 700 920M530 400 680 420M560 440 680 500M480 480 620 500M560 360 590 500M540 520 560 680M600 500 620 640M500 620 680 640M720 560 740 640M700 600 860 610M980 370 1040 460M960 430 1060 400M1030 560 1120 640M1080 560 1020 640M660 720 820 760M700 820 800 740M780 780 900 870M840 700 1000 720M850 740 1000 735M800 880 780 978M1030 900 1140 880M1220 420 1240 500"/>
  <path class="mwb" d="M770 177 880 220 960 245Q1070 290 1130 400L1200 530Q1255 620 1258 720T1240 978M870 240Q890 177 930 177 920 210 960 260M430 705 480 690 760 685Q800 710 840 685 900 650 980 660L1266 650"/><path class="mw" d="M770 177 880 220 960 245Q1070 290 1130 400L1200 530Q1255 620 1258 720T1240 978M870 240Q890 177 930 177 920 210 960 260M430 705 480 690 760 685Q800 710 840 685 900 650 980 660L1266 650"/>
  <path class="trb" d="M245 177 242 300M130 365 160 350 200 345M440 177 400 270 320 320 290 365 330 390 330 470 360 530 430 570 430 740 460 810 430 900 420 978M430 760 520 770 640 800 740 855 870 865 900 900 1080 950M960 260 1000 360 1040 500 1070 600 1120 650 1130 740 1165 820 1160 978M80 915 150 905 200 925 220 970M420 930 330 955"/><path class="tr" d="M245 177 242 300M130 365 160 350 200 345M440 177 400 270 320 320 290 365 330 390 330 470 360 530 430 570 430 740 460 810 430 900 420 978M430 760 520 770 640 800 740 855 870 865 900 900 1080 950M960 260 1000 360 1040 500 1070 600 1120 650 1130 740 1165 820 1160 978M80 915 150 905 200 925 220 970M420 930 330 955"/>
</g>
<g id="over"></g>
</svg>
<div class="types"><button>Karte</button><button>Satellit</button></div>
<div class="ctl fs"><button aria-label="Vollbild"><lt-icon name="full"></lt-icon></button></div>
<div class="ctl man"><button aria-label="Street View"><svg width="14" height="22" viewBox="0 0 14 22"><circle cx="7" cy="4" r="3.500" fill="#fbb12f" stroke="#a97118" stroke-width=".6"/><path d="M4 7.500H10Q12.500 8 12.500 11V15H10.500V20.500H7.700V16H6.300V20.500H3.500V15H1.500V11Q1.500 8 4 7.500Z" fill="#fbb12f" stroke="#c58a2a" stroke-width=".6"/><path d="M4.500 7.500 7 9.500 9.500 7.500Z" fill="#e4632b"/></svg></button></div>
<div class="ctl zoom"><button aria-label="Vergrößern"><lt-icon name="more"></lt-icon></button><hr><button aria-label="Verkleinern"><lt-icon name="minus"></lt-icon></button></div>
<a class="logo" href="#"><span style="color:#4285f4">G</span><span style="color:#ea4335">o</span><span style="color:#fbbc05">o</span><span style="color:#4285f4">g</span><span style="color:#34a853">l</span><span style="color:#ea4335">e</span></a>
<div class="legal"><button>Kurzbefehle</button><span>Kartendaten © 2022 GeoBasis-DE/BKG (©2009)</span><a href="#">Nutzungsbedingungen</a></div>`,
(el, root) => {
  const at = (t, x, y) => [Math.round(x / 3 + TILE[t]), Math.round(y / 3 - 59)];
  const esc = s => s.replace('&', '&amp;');
  let out = SHIELDS.map(([t, px, py, s, k]) => {
    const [x, y] = at(t, px, py), w = k === 'A' ? 12 : 5 + 4 * s.length;
    return `<rect x="${x - w / 2}" y="${y - 4}" width="${w}" height="8" rx="1.500" fill="${k === 'A' ? '#3a72c4' : '#fbd63c'}"/><text class="${k}" x="${x}" y="${y + 3}">${s}</text>`;
  }).join('');
  const drop = (x, y, r, c) => `<path d="M${x} ${y + r * 1.95}L${x - r * .85} ${y + r * .55}A${r} ${r} 0 1 1 ${x + r * .85} ${y + r * .55}Z" fill="${c}"/>`;
  out += PINS.map(([t, px, py, c, glyph]) => {
    const [x, y] = at(t, px, py);
    return drop(x, y, 7, c) + (glyph === 'H' ? `<text class="H" x="${x}" y="${y + 4}">H</text>` : `<g transform="translate(${x} ${y})">${glyph}</g>`);
  }).join('');
  const text = ([t, px, py, s, size, k]) => {
    const [x, y] = at(t, px, py);
    return `<text class="${k}" style="font-size:${size}px" x="${x}" y="${y + Math.round(size / 3)}">${esc(s)}</text>`;
  };
  out += LABELS.filter(l => l[5] !== 'k').map(text).join('');
  out += drop(239, 158, 8, '#ea4335') + drop(419, 138, 8, '#ea4335');
  out += LABELS.filter(l => l[5] === 'k').map(text).join('');
  root.querySelector('#over').innerHTML = out;
});

define('lt-tabs', `<style>
  :host { display: block; background: #fff; box-shadow: 0 3px 7px rgba(0,0,0,.22); border-radius: 3px; }
  .bar { display: flex; height: 37px; }
  button { width: 100px; border: 1px solid var(--slate); border-width: 1px 0 0 1px; padding: 0; background: #f4f4f4; font: inherit; font-size: 10px; font-weight: 700; color: #8d9ba2; }
  button:first-child { border-top-left-radius: 3px; }
  button[aria-selected=true] { border-color: transparent; background: #fff; color: var(--green); box-shadow: 2px 0 4px rgba(0,0,0,.12); clip-path: inset(0 -6px 0 0); }
  .panel { padding: 11px; }
</style><div class="bar" role="tablist"><button role="tab">INTERESSE</button><button role="tab">ANHÄNGE</button><button role="tab" aria-selected="true">KARTE</button></div><div class="panel" role="tabpanel"><lt-map></lt-map></div>`);

/* ---------- page ---------- */
define('lt-app', `<style>
  :host { display: flex; flex-direction: column; min-height: 100vh; overflow: hidden; position: relative; }
  .body { flex: 1; display: flex; }
  main { flex: 1; min-width: 0; position: relative; isolation: isolate; }
  .mark { position: absolute; z-index: -1; width: 224px; left: calc(50% + 2px); top: 50%; transform: translate(-50%, -50%); --mark-fill: #f1f1f1; --mark-gap: #f4f4f4; }
  .content { padding: 0 10px; }
  .cols { display: grid; grid-template-columns: 1fr 1fr; gap: 21px; align-items: start; }
  .left { display: grid; gap: 21px; }
  .chat { position: fixed; right: 12px; bottom: 5px; z-index: 4; display: flex; align-items: center; justify-content: center; gap: 6px; width: 73px; height: 31px; border: 0; border-radius: 16px; background: var(--green); color: #fff; font: 700 11px/16px "Open Sans", sans-serif; }
  .chat lt-icon { width: 13px; height: 13px; }
  .cursor { position: fixed; left: 1406px; bottom: -14px; z-index: 5; }
</style>
<lt-header></lt-header>
<div class="body"><lt-sidebar></lt-sidebar>
<main><lt-mark class="mark"></lt-mark><lt-crumbs></lt-crumbs>
<div class="content"><lt-toolbar></lt-toolbar>
<div class="cols"><div class="left"><lt-contact></lt-contact><lt-tabs></lt-tabs></div><lt-journal></lt-journal></div></div></main></div>
<button class="chat"><lt-icon name="help"></lt-icon>Hilfe</button>
<svg class="cursor" width="12" height="18" viewBox="0 0 12 18" aria-hidden="true"><path d="M.5 .5V15L4 11.500 6.500 17 8.500 16 6 10.500H11Z" fill="#fff" stroke="#223"/></svg>`);
</script>
</body>
</html>
